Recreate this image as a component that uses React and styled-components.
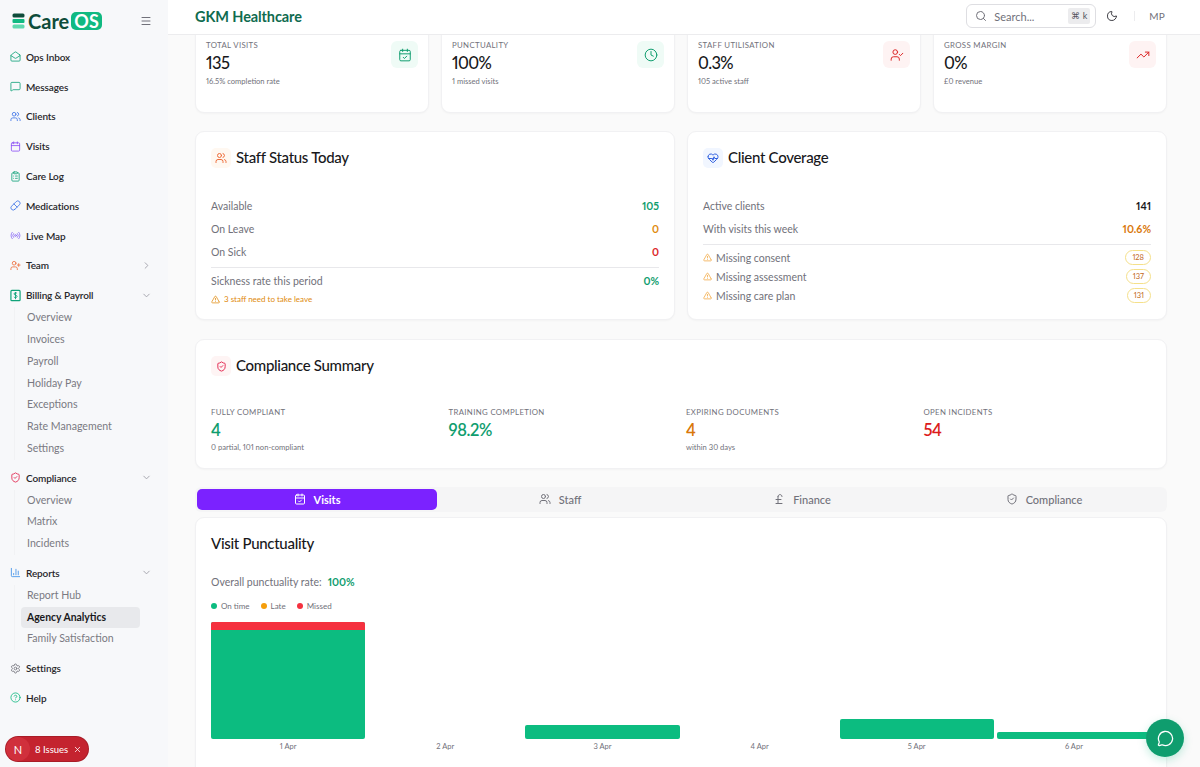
import React from "react";
import styled, { createGlobalStyle } from "styled-components";
import {
  MailOpen, MessageSquare, Users, Calendar, ClipboardList, Pill, Radio, UserPlus, ShieldCheck,
  ChartColumn, Settings, CircleHelp, CalendarCheck, Clock, UserCheck, TrendingUp, HeartPulse,
  TriangleAlert, Search, Moon, Menu, ChevronRight, ChevronDown, X, MessageCircle, PoundSterling,
} from "lucide-react";

const Global = createGlobalStyle`
  html, body { margin: 0; padding: 0; height: 100%; overflow: hidden; }
  body { font-family: "Lato", "Noto Sans", sans-serif; color: #18181b; background: #fafafa; font-feature-settings: "pnum"; font-variant-numeric: proportional-nums; }
  #root { height: 100vh; }
`;

const Shell = styled.div`display: flex; height: 767px; position: relative; overflow: hidden;`;
const Sidebar = styled.aside`width: 168px; flex: none; background: #f7f8fa; padding: 12px 0 0 0; box-sizing: border-box;`;
const LogoRow = styled.div`display: flex; align-items: center; height: 18px; padding-left: 12px; padding-right: 16px; margin-bottom: 12px;`;
const LogoMark = styled.svg`width: 13px; height: 16px; flex: none; margin-right: 3px;`;
const LogoText = styled.span`font-size: 20px; font-weight: 700; color: #0f4c3a; line-height: 18px;`;
const LogoPill = styled.span`margin-left: 2px; background: #10b981; color: #fff; font-size: 18px; font-weight: 700; line-height: 18px; padding: 0 3px; border-radius: 5px; letter-spacing: .3px;`;
const MenuBtn = styled.span`margin-left: auto; display: flex; color: #71717a;`;

const NavList = styled.nav`display: flex; flex-direction: column;`;
const NavRow = styled.div`display: flex; align-items: center; height: 29.8px; padding: 0 16px 0 10px; gap: 5px; font-size: 10px; letter-spacing: -.12px; font-weight: 600; color: #27272a; box-sizing: border-box;`;
const NavIcon = styled.span`width: 11px; display: flex; justify-content: center; color: ${p => p.$c};`;
const Caret = styled.span`margin-left: auto; display: flex; color: #a1a1aa;`;
const SubList = styled.div`display: flex; flex-direction: column; margin: -3px 0 3px 14px; padding-left: 6px; border-left: 1px solid #f1f2f4;`;
const SubItem = styled.div`height: 21.8px; line-height: 21.8px; width: 119px; padding-left: 6px; box-sizing: border-box; font-size: ${p => p.$active ? "10.4px" : "10.6px"}; border-radius: 4px;
  color: ${p => p.$active ? "#18181b" : "#7a7a82"}; background: ${p => p.$active ? "#e8e9ec" : "transparent"}; font-weight: ${p => p.$active ? 700 : 400};`;

const Main = styled.main`flex: 1; min-width: 0; display: flex; flex-direction: column; background: #fafafa;`;
const Header = styled.header`height: 35px; flex: none; display: flex; align-items: center; padding: 0 35px 2px 27px; background: #fff; border-bottom: 1px solid #ececee; box-sizing: border-box; position: relative; z-index: 2;`;
const Brand = styled.div`font-size: 14.5px; font-weight: 700; letter-spacing: -.1px; color: #0f6b4f;`;
const SearchBox = styled.div`margin-left: auto; width: 130px; height: 24px; box-sizing: border-box; border: 1px solid #dedee2; border-radius: 6px; display: flex; align-items: center; padding: 0 5px 0 8px; color: #71717a; font-size: 11px; gap: 7px;`;
const Kbd = styled.span`margin-left: auto; background: #ececee; border-radius: 2px; font-size: 9px; padding: 2px 3px; color: #52525b; line-height: 12px;`;
const MoonBtn = styled.span`display: flex; margin-left: 10px; color: #3f3f46;`;
const Sep = styled.span`width: 1px; height: 10px; background: #ececee; margin: 0 14px 0 16px;`;
const Avatar = styled.span`font-size: 10px; color: #71717a; letter-spacing: .2px;`;

const Scroll = styled.div`flex: 1; overflow: hidden; padding: 0 33px 0 27px;`;
const Inner = styled.div`margin-top: -10px; display: flex; flex-direction: column;`;

const Card = styled.section`background: #fff; border-radius: 9px; border: 1px solid #f1f1f3; box-shadow: 0 1px 2px rgba(0,0,0,.03); box-sizing: border-box;`;
const KpiGrid = styled.div`display: grid; grid-template-columns: repeat(4, 1fr); gap: 12px; margin-bottom: 18px;`;
const KpiCard = styled(Card)`height: 88px; padding: 13px 10px 0 10px; display: flex; justify-content: space-between; align-items: flex-start;`;
const KpiTile = styled.span`width: 27px; height: 27px; margin-top: 2px; border-radius: 6px; display: flex; align-items: center; justify-content: center; background: ${p => p.$bg}; color: ${p => p.$c};`;
const Label = styled.div`font-size: 7.8px; line-height: 12px; letter-spacing: .35px; text-transform: uppercase; color: #71717a;`;
const KpiValue = styled.div`font-size: 16.5px; line-height: 24px; font-weight: 500; letter-spacing: -.6px; color: #18181b;`;
const Small = styled.div`font-size: 7.6px; line-height: 12px; color: #71717a;`;

const TwoCol = styled.div`display: grid; grid-template-columns: 1fr 1fr; gap: 12px; margin-bottom: 19px;`;
const PanelCard = styled(Card)`height: 189px; padding: 16px 15px 0 15px;`;
const TitleRow = styled.div`display: flex; align-items: center; gap: 5px; height: 20px; margin-bottom: 26px;`;
const TitleTile = styled.span`width: 20px; height: 20px; border-radius: 5px; display: flex; align-items: center; justify-content: center; background: ${p => p.$bg}; color: ${p => p.$c};`;
const Title = styled.h2`margin: 0 0 2px; font-size: 15px; font-weight: 500; letter-spacing: -.3px; color: #18181b;`;
const StatRow = styled.div`display: flex; justify-content: space-between; align-items: center; height: 23px; font-size: 10.5px; color: #71717a;`;
const StatValue = styled.span`font-weight: 700; font-size: 10.5px; color: ${p => p.$c};`;
const Rule = styled.hr`border: none; border-top: 1px solid #e8e8eb; margin: 4px 0 1px;`;
const WarnLine = styled.div`display: flex; align-items: center; gap: 4px; font-size: 8px; color: #e08a0c; height: 14px;`;
const MissList = styled.div`padding-top: 2px;`;
const MissRow = styled.div`display: flex; align-items: center; height: 19px; font-size: 10.5px; color: #71717a; gap: 4px;`;
const MissBadge = styled.span`margin-left: auto; height: 15px; line-height: 14px; padding: 0 6px; box-sizing: border-box; border: 1px solid #f5e08a; border-radius: 8px; font-size: 7.5px; color: #c2691a;`;
const WarnIcon = styled.span`display: flex; color: #f2a63c;`;

const SummaryCard = styled(Card)`height: 130px; padding: 16px 15px 0 15px; margin-bottom: 18px;`;
const SummaryTitle = styled(TitleRow)`margin-bottom: 30px;`;
const SummaryGrid = styled.div`display: grid; grid-template-columns: repeat(4, 1fr); gap: 10px;`;
const SummaryValue = styled.div`font-size: 16.5px; line-height: 24px; font-weight: 600; letter-spacing: -.4px; margin-bottom: -1px; color: ${p => p.$c};`;

const Tabs = styled.div`display: grid; grid-template-columns: repeat(4, 1fr); background: #f5f5f6; border-radius: 6px; padding: 2px; height: 25px; box-sizing: border-box; margin-bottom: 5px;`;
const Tab = styled.div`display: flex; align-items: center; justify-content: center; gap: 8px; padding-bottom: 1px; box-sizing: border-box; border-radius: 5px; font-size: 11px; font-weight: ${p => p.$on ? 700 : 500};
  color: ${p => p.$on ? "#fff" : "#71717a"}; background: ${p => p.$on ? "#7b22ff" : "transparent"}; margin-right: ${p => p.$on ? "2px" : "0"};`;

const ChartCard = styled(Card)`padding: 15px 15px 12px; height: 262px;`;
const ChartTitle = styled(Title)`line-height: 20px; margin: 0 0 22px;`;
const RateLine = styled.div`font-size: 10.5px; line-height: 14px; color: #71717a; display: flex; gap: 6px; margin-bottom: 11px;`;
const RateValue = styled.b`color: #0f9d6e; font-weight: 700;`;
const Legend = styled.div`display: flex; gap: 11px; font-size: 8px; color: #71717a; height: 12px; align-items: center; margin-bottom: 10px;`;
const LegendItem = styled.span`display: flex; align-items: center; gap: 4px;`;
const Dot = styled.i`width: 6px; height: 6px; border-radius: 50%; background: ${p => p.$c};`;
const Bars = styled.div`display: grid; grid-template-columns: repeat(6, 1fr); gap: 3px; height: 117px; align-items: end;`;
const Bar = styled.div`display: flex; flex-direction: column; border-radius: 2px; overflow: hidden; background: #0cbc80;`;
const BarMissed = styled.div`height: 8px; background: #f5313f;`;
const Axis = styled.div`display: grid; grid-template-columns: repeat(6, 1fr); gap: 3px; margin-top: 3px;`;
const Tick = styled.span`text-align: center; font-size: 7.5px; line-height: 10px; color: #71717a;`;

const Fab = styled.div`position: absolute; left: 1146px; top: 719px; width: 38px; height: 38px; border-radius: 50%; background: #0f9d6e; color: #fff; display: flex; align-items: center; justify-content: center; box-shadow: 0 3px 8px rgba(16,185,129,.25); z-index: 3;`;
const Issues = styled.div`position: absolute; left: 6px; top: 737px; width: 82px; height: 24px; border-radius: 12px; background: #c4232f; color: #fff; display: flex; align-items: center; font-size: 9.5px; box-sizing: border-box; box-shadow: 0 0 0 1px #a81c27; z-index: 3;`;
const IssueN = styled.span`width: 24px; height: 24px; border-radius: 50%; background: #d0303c; display: flex; align-items: center; justify-content: center; margin-right: 5px; font-size: 11px; flex: none;`;
const IssueX = styled.span`display: flex; margin-left: 5px;`;

const BillIcon = () => (
  <svg width="12" height="13" viewBox="0 0 12 13" fill="none" stroke="currentColor" strokeWidth="1.3">
    <rect x="1" y="1" width="10" height="11" rx="1" />
    <path d="M7.7 4.3C7.3 3.7 6.7 3.5 6 3.5 5 3.5 4.4 4 4.4 4.8 4.4 6.4 7.7 5.7 7.7 7.5 7.7 8.3 7 8.8 6 8.8 5.2 8.8 4.6 8.5 4.2 8M6 2.7v7.8" strokeWidth="1" />
  </svg>
);

const topNav = [
  ["Ops Inbox", MailOpen, "#10a37a"],
  ["Messages", MessageSquare, "#10a37a"],
  ["Clients", Users, "#3b72e8"],
  ["Visits", Calendar, "#8b4ff5"],
  ["Care Log", ClipboardList, "#10a37a"],
  ["Medications", Pill, "#3b72e8"],
  ["Live Map", Radio, "#8b6cf5"],
];

const Item = ({ icon: I, c, label, caret }) => (
  <NavRow>
    <NavIcon $c={c}><I size={13} strokeWidth={1.8} /></NavIcon>
    {label}
    {caret === "right" && <Caret><ChevronRight size={11} /></Caret>}
    {caret === "down" && <Caret><ChevronDown size={11} /></Caret>}
  </NavRow>
);

const kpis = [
  ["Total Visits", "135", "16.5% completion rate", CalendarCheck, "#effbf6", "#0f9d6e"],
  ["Punctuality", "100%", "1 missed visits", Clock, "#effbf6", "#0f9d6e"],
  ["Staff Utilisation", "0.3%", "105 active staff", UserCheck, "#fef3f3", "#dc2626"],
  ["Gross Margin", "0%", "£0 revenue", TrendingUp, "#fef3f3", "#dc2626"],
];

const bars = [
  { label: "1 Apr", h: 117, missed: true },
  { label: "2 Apr", h: 0 },
  { label: "3 Apr", h: 14 },
  { label: "4 Apr", h: 0 },
  { label: "5 Apr", h: 20 },
  { label: "6 Apr", h: 7 },
];

export default function App() {
  return (
    <Shell>
      <Global />
      <Sidebar>
        <LogoRow>
          <LogoMark viewBox="0 0 13 16">
            <rect x="0.5" y="0.5" width="12" height="4" rx="1.5" fill="#0f4c3a" />
            <rect x="0.5" y="6" width="12" height="4" rx="1" fill="#10b981" />
            <rect x="0.5" y="11.5" width="12" height="4" rx="1.5" fill="#5fd9ae" />
          </LogoMark>
          <LogoText>Care</LogoText>
          <LogoPill>OS</LogoPill>
          <MenuBtn><Menu size={12} /></MenuBtn>
        </LogoRow>
        <NavList>
          {topNav.map(([l, i, c]) => <Item key={l} label={l} icon={i} c={c} />)}
          <Item label="Team" icon={UserPlus} c="#ee6c3a" caret="right" />
          <Item label="Billing & Payroll" icon={BillIcon} c="#10a37a" caret="down" />
          <SubList>
            {["Overview", "Invoices", "Payroll", "Holiday Pay", "Exceptions", "Rate Management", "Settings"].map(s => <SubItem key={s}>{s}</SubItem>)}
          </SubList>
          <Item label="Compliance" icon={ShieldCheck} c="#e11d48" caret="down" />
          <SubList>
            {["Overview", "Matrix", "Incidents"].map(s => <SubItem key={s}>{s}</SubItem>)}
          </SubList>
          <Item label="Reports" icon={ChartColumn} c="#3b8fe8" caret="down" />
          <SubList>
            <SubItem>Report Hub</SubItem>
            <SubItem $active>Agency Analytics</SubItem>
            <SubItem>Family Satisfaction</SubItem>
          </SubList>
          <Item label="Settings" icon={Settings} c="#71717a" />
          <Item label="Help" icon={CircleHelp} c="#10b981" />
        </NavList>
      </Sidebar>
      <Main>
        <Header>
          <Brand>GKM Healthcare</Brand>
          <SearchBox><Search size={12} />Search...<Kbd>⌘ k</Kbd></SearchBox>
          <MoonBtn><Moon size={12} /></MoonBtn>
          <Sep />
          <Avatar>MP</Avatar>
        </Header>
        <Scroll>
          <Inner>
            <KpiGrid>
              {kpis.map(([l, v, s, I, bg, c]) => (
                <KpiCard key={l}>
                  <div>
                    <Label>{l}</Label>
                    <KpiValue>{v}</KpiValue>
                    <Small>{s}</Small>
                  </div>
                  <KpiTile $bg={bg} $c={c}><I size={14} strokeWidth={1.7} /></KpiTile>
                </KpiCard>
              ))}
            </KpiGrid>
            <TwoCol>
              <PanelCard>
                <TitleRow>
                  <TitleTile $bg="#fff8f1" $c="#ee6c3a"><Users size={12} /></TitleTile>
                  <Title>Staff Status Today</Title>
                </TitleRow>
                <StatRow>Available<StatValue $c="#0f9d6e">105</StatValue></StatRow>
                <StatRow>On Leave<StatValue $c="#e08a0c">0</StatValue></StatRow>
                <StatRow>On Sick<StatValue $c="#dc2626">0</StatValue></StatRow>
                <Rule />
                <StatRow>Sickness rate this period<StatValue $c="#0f9d6e">0%</StatValue></StatRow>
                <WarnLine><TriangleAlert size={9} />3 staff need to take leave</WarnLine>
              </PanelCard>
              <PanelCard>
                <TitleRow>
                  <TitleTile $bg="#f1f6ff" $c="#2f5fe0"><HeartPulse size={12} /></TitleTile>
                  <Title>Client Coverage</Title>
                </TitleRow>
                <StatRow>Active clients<StatValue $c="#18181b">141</StatValue></StatRow>
                <StatRow>With visits this week<StatValue $c="#d9770b">10.6%</StatValue></StatRow>
                <Rule />
                <MissList>
                  {[["Missing consent", 128], ["Missing assessment", 137], ["Missing care plan", 131]].map(([l, n]) => (
                    <MissRow key={l}>
                      <WarnIcon><TriangleAlert size={9} /></WarnIcon>{l}<MissBadge>{n}</MissBadge>
                    </MissRow>
                  ))}
                </MissList>
              </PanelCard>
            </TwoCol>
            <SummaryCard>
              <SummaryTitle>
                <TitleTile $bg="#fef4f4" $c="#e11d48"><ShieldCheck size={11} /></TitleTile>
                <Title>Compliance Summary</Title>
              </SummaryTitle>
              <SummaryGrid>
                <div><Label>Fully Compliant</Label><SummaryValue $c="#0f9d6e">4</SummaryValue><Small>0 partial, 101 non-compliant</Small></div>
                <div><Label>Training Completion</Label><SummaryValue $c="#0f9d6e">98.2%</SummaryValue></div>
                <div><Label>Expiring Documents</Label><SummaryValue $c="#d9770b">4</SummaryValue><Small>within 30 days</Small></div>
                <div><Label>Open Incidents</Label><SummaryValue $c="#dc1c1c">54</SummaryValue></div>
              </SummaryGrid>
            </SummaryCard>
            <Tabs>
              <Tab $on><CalendarCheck size={12} />Visits</Tab>
              <Tab><Users size={12} />Staff</Tab>
              <Tab><PoundSterling size={12} />Finance</Tab>
              <Tab><ShieldCheck size={12} />Compliance</Tab>
            </Tabs>
            <ChartCard>
              <ChartTitle>Visit Punctuality</ChartTitle>
              <RateLine>Overall punctuality rate: <RateValue>100%</RateValue></RateLine>
              <Legend>
                <LegendItem><Dot $c="#0cbc80" />On time</LegendItem>
                <LegendItem><Dot $c="#f59e0b" />Late</LegendItem>
                <LegendItem><Dot $c="#f5313f" />Missed</LegendItem>
              </Legend>
              <Bars>
                {bars.map(b => (
                  <Bar key={b.label} style={{ height: b.h }}>{b.missed && <BarMissed />}</Bar>
                ))}
              </Bars>
              <Axis>{bars.map(b => <Tick key={b.label}>{b.label}</Tick>)}</Axis>
            </ChartCard>
          </Inner>
        </Scroll>
      </Main>
      <Issues>
        <IssueN>N</IssueN>8 Issues<IssueX><X size={9} /></IssueX>
      </Issues>
      <Fab><MessageCircle size={17} strokeWidth={1.8} /></Fab>
    </Shell>
  );
}
